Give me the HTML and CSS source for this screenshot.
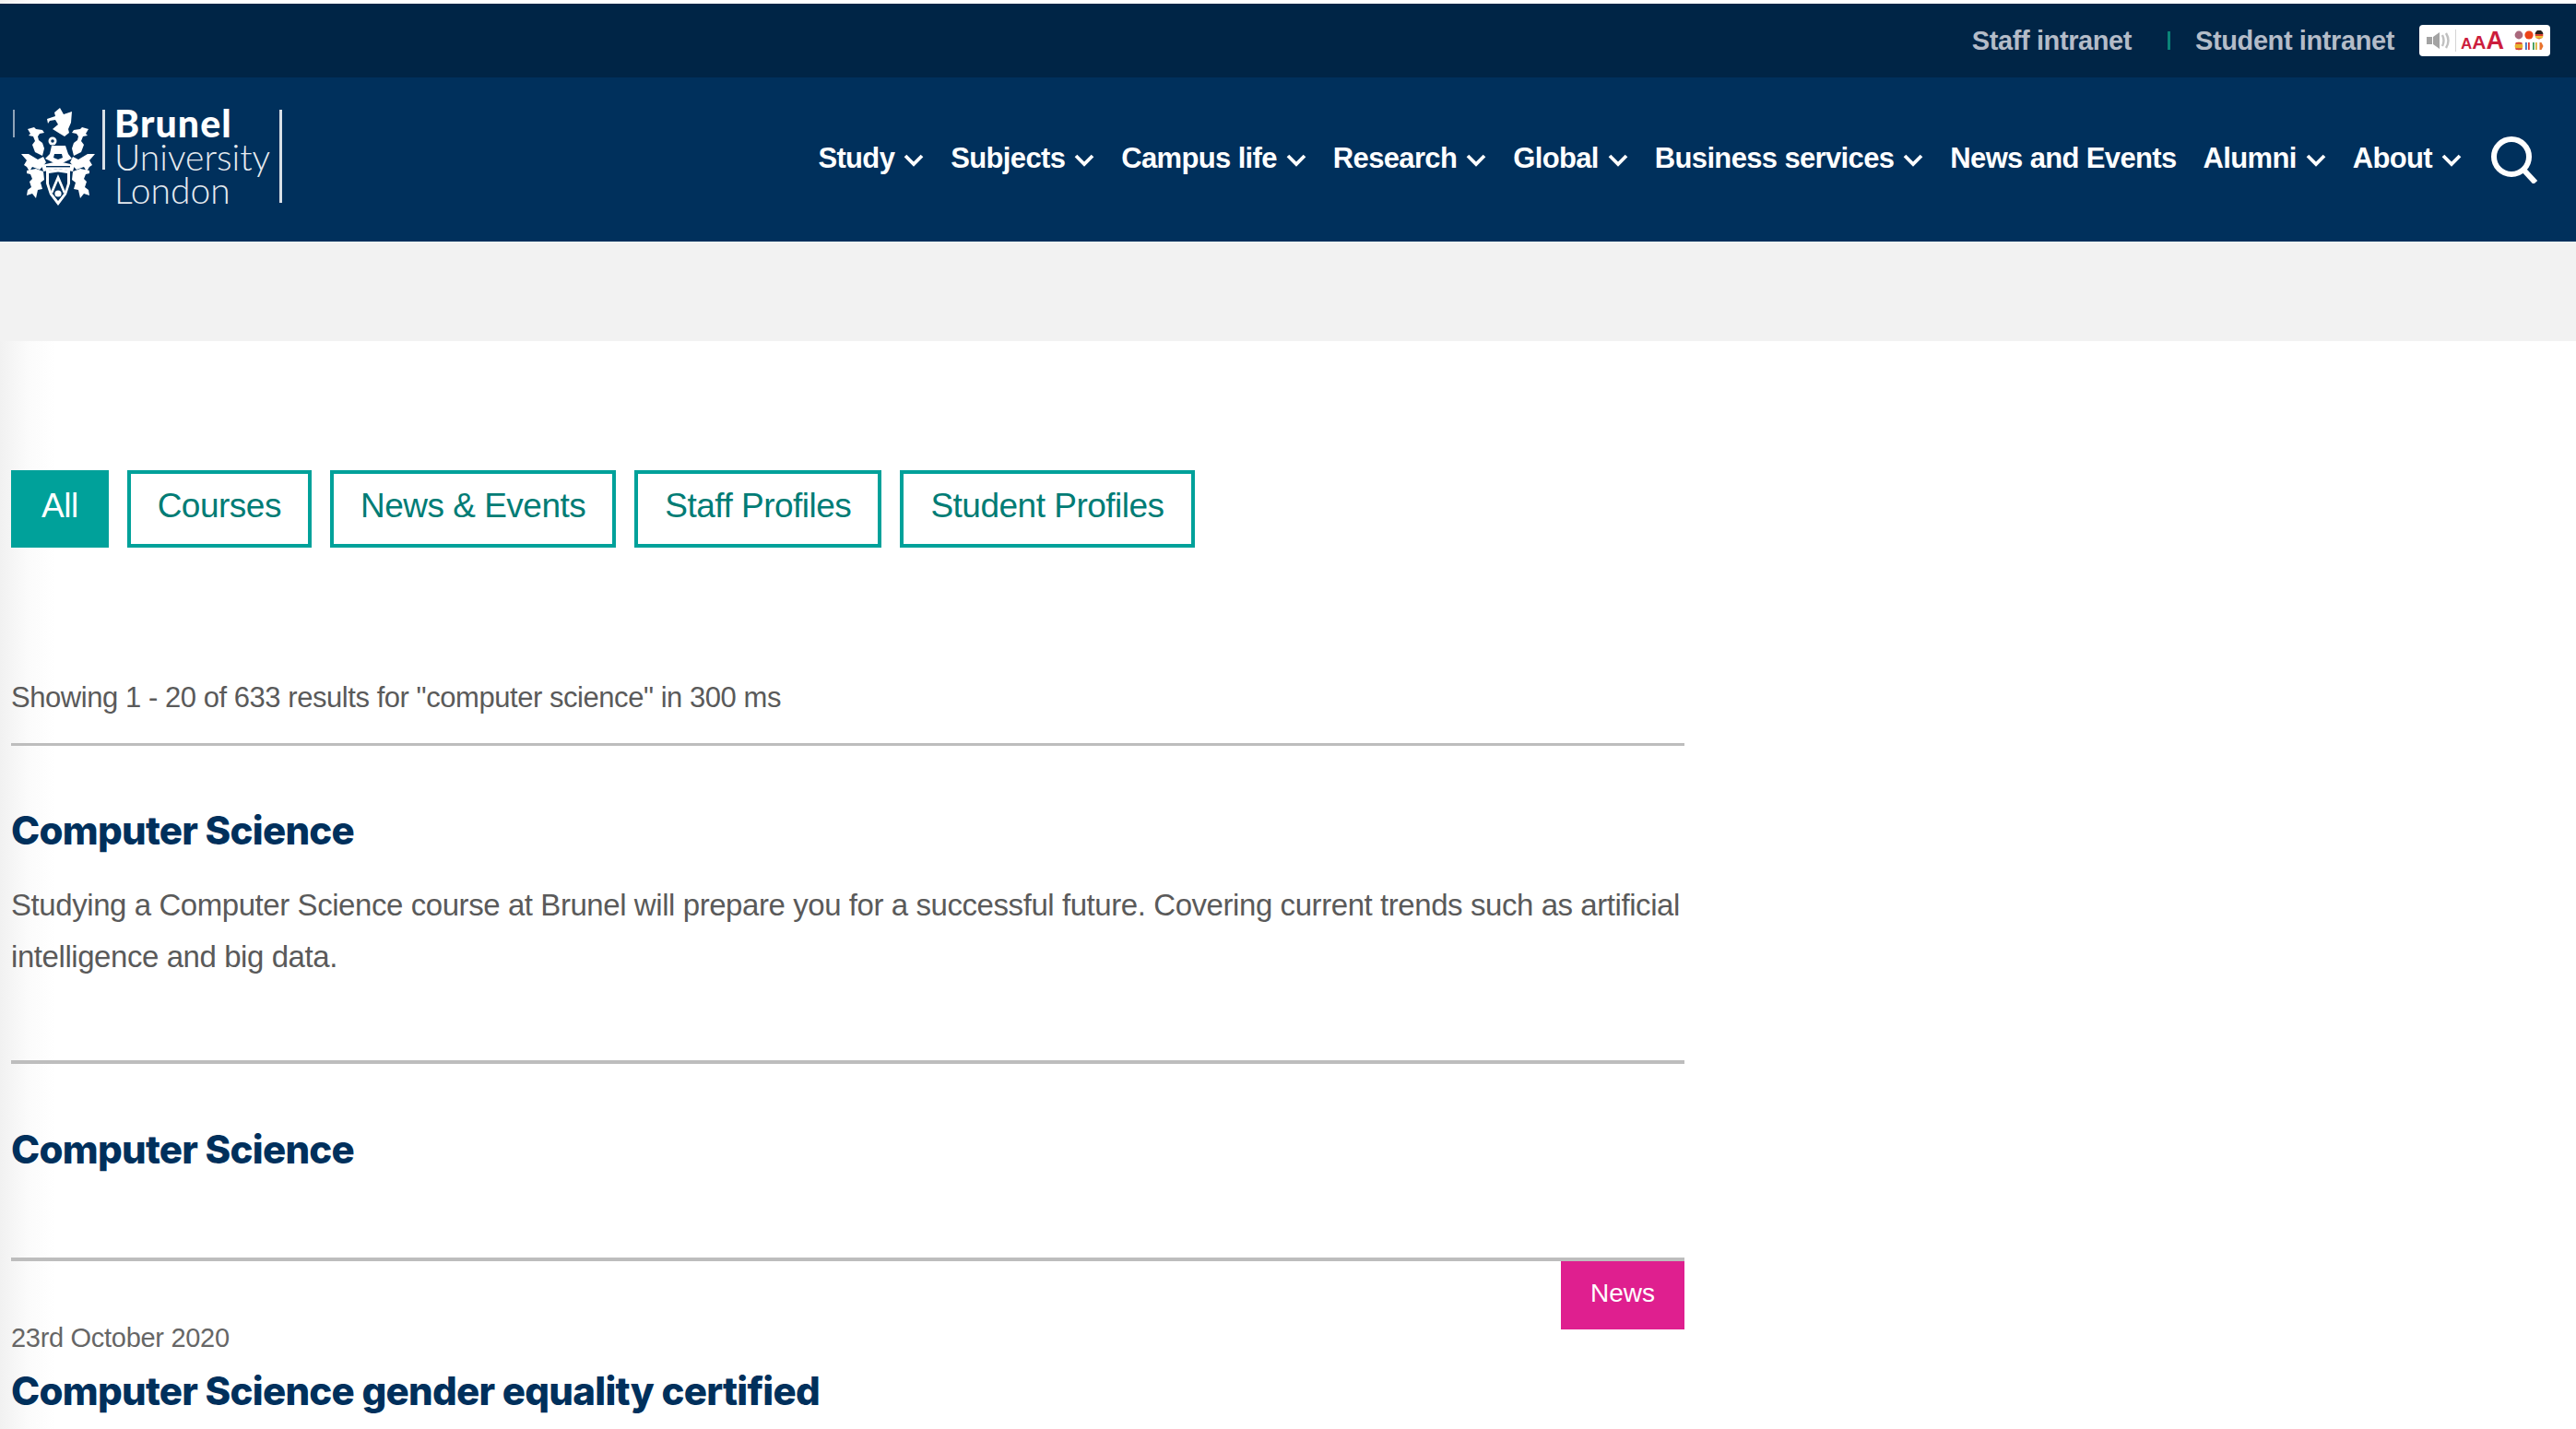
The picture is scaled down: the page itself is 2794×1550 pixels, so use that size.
FILE: index.html
```html
<!DOCTYPE html>
<html lang="en">
<head>
<meta charset="utf-8">
<title>Search - Brunel University London</title>
<link rel="stylesheet" href="styles.css">
</head>
<body>
<header class="site-header">
  <div class="topbar">
    <a class="top-link">Staff intranet</a>
    <span class="top-sep"></span>
    <a class="top-link">Student intranet</a>
    <div class="access">
      <svg class="access-speaker" viewBox="0 0 26 18"><path d="M0 5h6v8H0zM7 5l7-5v18l-7-5z" fill="#a3a3a3"/><path d="M17 3q3 6 0 12M21 1q5 8 0 16" fill="none" stroke="#c0c0c0" stroke-width="2.4"/></svg>
      <span class="access-div"></span>
      <span class="access-aaa"><span class="a1">A</span><span class="a2">A</span><span class="a3">A</span></span>
      <svg class="access-flags" viewBox="0 0 32 22">
        <circle cx="5" cy="5" r="4.4" fill="#a9697c"/><circle cx="16" cy="5" r="4.6" fill="#ec4317"/>
        <circle cx="27" cy="5" r="4.4" fill="#d9412a"/><path d="M22.6 4a4.4 4.4 0 0 1 8.8 0z" fill="#2b2320"/><path d="M22.7 6h8.6a4.4 4.4 0 0 1-1 2.4h-6.600a4.400 4.400 0 0 1-1-2.400z" fill="#eec13a"/>
        <circle cx="5" cy="17" r="4.400" fill="#e8b32c"/><path d="M1 14.800h8l-.8-1.800H1.800zM1 19.200h8l-.8 1.800H1.800z" fill="#d8423a"/>
        <rect x="12" y="13" width="1.800" height="8" fill="#3f6fc2"/><rect x="15" y="13" width="1.800" height="8" fill="#e23b32"/>
        <rect x="20" y="13" width="1.800" height="8" fill="#3b9a55"/><rect x="23" y="13" width="1.800" height="8" fill="#d8b23a"/>
        <path d="M27.500 13h2l2 4-2 4h-2z" fill="#e8722c"/>
      </svg>
    </div>
  </div>
  <div class="mainbar">
    <a class="logo">
      <span class="logo-tick"></span>
      <svg class="crest" viewBox="0 0 80 106">
        <g fill="#fff">
          <path d="M42 0l4 7 9-3-1 12-3 7 1 4-5 4-5-3-8-5 6-5-3-5-6 1-2 3-1-5 9-3-1-4z"/>
          <path d="M7 23l7-2 2 2 7 1 2 3-5 1-2 3 1 4 4 3 2 6-2 8-8-4-3-8 3-4-2-5-5-1 2-2z"/>
          <path d="M73 23l-7-2-2 2-7 1-2 3 5 1 2 3-1 4-4 3-2 6 2 8 8-4 3-8-3-4 2-5 5-1-2-2z"/>
          <path d="M0 50l8 0 10 6 6-3 3 6-5 6-2 2-8-3-3 5-3-5-3-2 3-5z"/>
          <path d="M80 50l-8 0-10 6-6-3-3 6 5 6 2 2 8-3 3 5 3-5 3-2-3-5z"/>
          <path d="M6 68l10-2 8 3 1 9-4 3 2 7-5 1-2 9-4-5-6 2 1-6 4-3-2-6 3-3-2-5-4-1z"/>
          <path d="M74 68l-10-2-8 3-1 9 4 3-2 7 5 1 2 9 4-5 6 2-1-6-4-3 2-6-3-3 2-5 4-1z"/>
          <circle cx="34" cy="36" r="4.500"/>
          <path d="M33 41h15l3 9 4 5-15 7-14-7 5-5z"/>
          <path d="M22 62l18-4 18 4-2 7-16-3-16 3z"/>
          <path d="M27 68l13-2 13 2v14l-4 12-9 12-9-12-4-12zM30 71v11l3 10 7 9 7-9 3-10v-11l-10-1.500z" fill-rule="evenodd"/>
          <path d="M40 72l8 19-2 2-6-14-6 14-2-2z"/>
          <circle cx="40" cy="93" r="3.600"/>
        </g>
        <g fill="#00305c">
          <circle cx="34" cy="36" r="1.800"/>
          <path d="M36 50h8l1 4-5 2-5-2z"/>
          <rect x="27" y="63" width="26" height="1.400"/>
        </g>
      </svg>
      <span class="logo-rule logo-rule-short"></span>
      <span class="logo-text">
        <span class="logo-brunel">Brunel</span>
        <span class="logo-line">University</span>
        <span class="logo-line">London</span>
      </span>
      <span class="logo-rule logo-rule-long"></span>
    </a>
    <nav class="nav">
      <a class="nav-item">Study<svg class="chev" viewBox="0 0 22 14"><path d="M2 2l9 9 9-9"/></svg></a>
      <a class="nav-item">Subjects<svg class="chev" viewBox="0 0 22 14"><path d="M2 2l9 9 9-9"/></svg></a>
      <a class="nav-item">Campus life<svg class="chev" viewBox="0 0 22 14"><path d="M2 2l9 9 9-9"/></svg></a>
      <a class="nav-item">Research<svg class="chev" viewBox="0 0 22 14"><path d="M2 2l9 9 9-9"/></svg></a>
      <a class="nav-item">Global<svg class="chev" viewBox="0 0 22 14"><path d="M2 2l9 9 9-9"/></svg></a>
      <a class="nav-item">Business services<svg class="chev" viewBox="0 0 22 14"><path d="M2 2l9 9 9-9"/></svg></a>
      <a class="nav-item">News and Events</a>
      <a class="nav-item">Alumni<svg class="chev" viewBox="0 0 22 14"><path d="M2 2l9 9 9-9"/></svg></a>
      <a class="nav-item">About<svg class="chev" viewBox="0 0 22 14"><path d="M2 2l9 9 9-9"/></svg></a>
    </nav>
    <svg class="search-icon" viewBox="0 0 52 52"><circle cx="23" cy="23" r="19"/><path d="M36 37l13 14"/></svg>
  </div>
</header>
<div class="band"></div>
<main class="content">
  <div class="filters">
    <a class="filter is-active">All</a>
    <a class="filter">Courses</a>
    <a class="filter">News &amp; Events</a>
    <a class="filter">Staff Profiles</a>
    <a class="filter">Student Profiles</a>
  </div>
  <section class="results">
    <p class="summary">Showing 1 - 20 of 633 results for "computer science" in 300 ms</p>
    <article class="result result-first">
      <h2 class="result-title">Computer Science</h2>
      <p class="result-text">Studying a Computer Science course at Brunel will prepare you for a successful future. Covering current trends such as artificial intelligence and big data.</p>
    </article>
    <article class="result result-second">
      <h2 class="result-title">Computer Science</h2>
    </article>
    <article class="result result-news">
      <span class="badge">News</span>
      <p class="result-date">23rd October 2020</p>
      <h2 class="result-title">Computer Science gender equality certified</h2>
    </article>
  </section>
</main>
</body>
</html>
```
FILE: styles.css
```css
* { box-sizing: border-box; }
html, body { margin: 0; height: 100%; }
body {
  height: 1550px;
  overflow: hidden;
  background: linear-gradient(90deg, #f1f1f1 0, #fbfbfb 30px, #fff 60px);
  font-family: "Liberation Sans", Arial, sans-serif;
  color: #5a5a5a;
  padding-top: 4px;
}
.site-header { background: #00305c; }
.topbar {
  height: 80px;
  background: #002546;
  display: flex;
  align-items: center;
  justify-content: flex-end;
  padding-right: 28px;
}
.top-link {
  color: #b4bcc8;
  font-size: 29px;
  font-weight: 700;
  letter-spacing: -0.4px;
}
.top-sep {
  width: 3px;
  height: 20px;
  background: #0a8478;
  margin: 0 27px 0 39px;
}
.access {
  margin-left: 27px;
  height: 34px;
  flex: none;
  width: 142px;
  background: #fff;
  border-radius: 4px;
  display: flex;
  align-items: center;
  padding-left: 8px;
}
.access-speaker { width: 26px; height: 18px; flex: none; }
.access-div { width: 1px; height: 24px; background: #d5d5d5; margin: 0 5px; flex: none; }
.access-aaa { color: #cc1d3c; font-weight: 700; display: flex; align-items: baseline; width: 50px; line-height: 28px; margin-top: 4px; }
.a1 { font-size: 17px; }
.a2 { font-size: 21px; }
.a3 { font-size: 27px; }
.access-flags { width: 32px; height: 22px; margin-left: 8px; flex: none; }
.mainbar {
  height: 178px;
  display: flex;
  align-items: flex-start;
  padding-right: 41px;
}
.logo { display: flex; align-items: flex-start; margin: 35px 0 0 14px; }
.logo-tick { width: 2px; height: 30px; background: #8fa3b8; flex: none; }
.crest { width: 80px; height: 106px; margin-left: 7px; margin-top: -2px; flex: none; filter: blur(0.4px); }
.logo-rule { width: 3px; background: #d8dfe6; flex: none; }
.logo-rule-short { height: 65px; margin-left: 8px; }
.logo-rule-long { height: 101px; margin-left: 3px; }
.logo-text { display: flex; flex-direction: column; margin: -3px 0 0 10px; width: 176px; color: #e6ebf0; font-family: Lato, sans-serif; }
.logo-brunel { font-size: 41px; font-weight: 900; line-height: 36px; color: #fff; letter-spacing: 1.1px; }
.logo-line { font-size: 39px; font-weight: 300; line-height: 36px; white-space: nowrap; }
.nav {
  margin-left: auto;
  display: flex;
  align-items: center;
  gap: 29px;
  height: 176px;
}
.nav-item {
  display: flex;
  align-items: center;
  color: #fff;
  font-size: 31px;
  font-weight: 700;
  letter-spacing: -0.65px;
  white-space: nowrap;
}
.chev { width: 22px; height: 14px; margin-left: 10px; margin-top: 4px; flex: none; }
.chev path { fill: none; stroke: #fff; stroke-width: 3.8; }
.search-icon { width: 52px; height: 52px; margin: 63px 0 0 31px; flex: none; }
.search-icon circle, .search-icon path { fill: none; stroke: #fff; stroke-width: 6; }
.band { height: 108px; background: #f2f2f2; }
.content { padding: 140px 0 0 12px; }
.filters { display: flex; gap: 20px; }
.filter {
  height: 84px;
  padding: 0 29px 6px;
  border: 4px solid #00a19a;
  color: #007c75;
  font-size: 37px;
  display: flex;
  align-items: center;
  letter-spacing: -0.5px;
}
.filter.is-active { background: #00a19a; color: #fff; }
.results { width: 1815px; margin-top: 145px; }
.summary { margin: 0; height: 70px; font-size: 31px; line-height: 36px; letter-spacing: -0.45px; border-bottom: 3px solid #bdbdbd; }
.result { position: relative; border-top: 4px solid #bdbdbd; }
.result-first { height: 341px; padding-top: 67px; border-top: 0; }
.result-second { height: 214px; padding-top: 68px; }
.result-news { padding-top: 65px; }
.result-title {
  margin: 0;
  color: #00305c;
  font-family: Inter, sans-serif;
  font-size: 42px;
  line-height: 50px;
  font-weight: 800;
  letter-spacing: -0.75px;
}
.result-text { margin: 28px 0 0; font-size: 33px; line-height: 56px; letter-spacing: -0.43px; }
.result-date { margin: 0 0 15px; font-size: 29px; line-height: 36px; letter-spacing: -0.3px; color: #666; }
.badge {
  position: absolute;
  top: 0;
  right: 0;
  width: 134px;
  height: 74px;
  background: #df1f8f;
  color: #fff;
  font-size: 28px;
  display: flex;
  align-items: center;
  justify-content: center;
  padding-bottom: 4px;
}
```
